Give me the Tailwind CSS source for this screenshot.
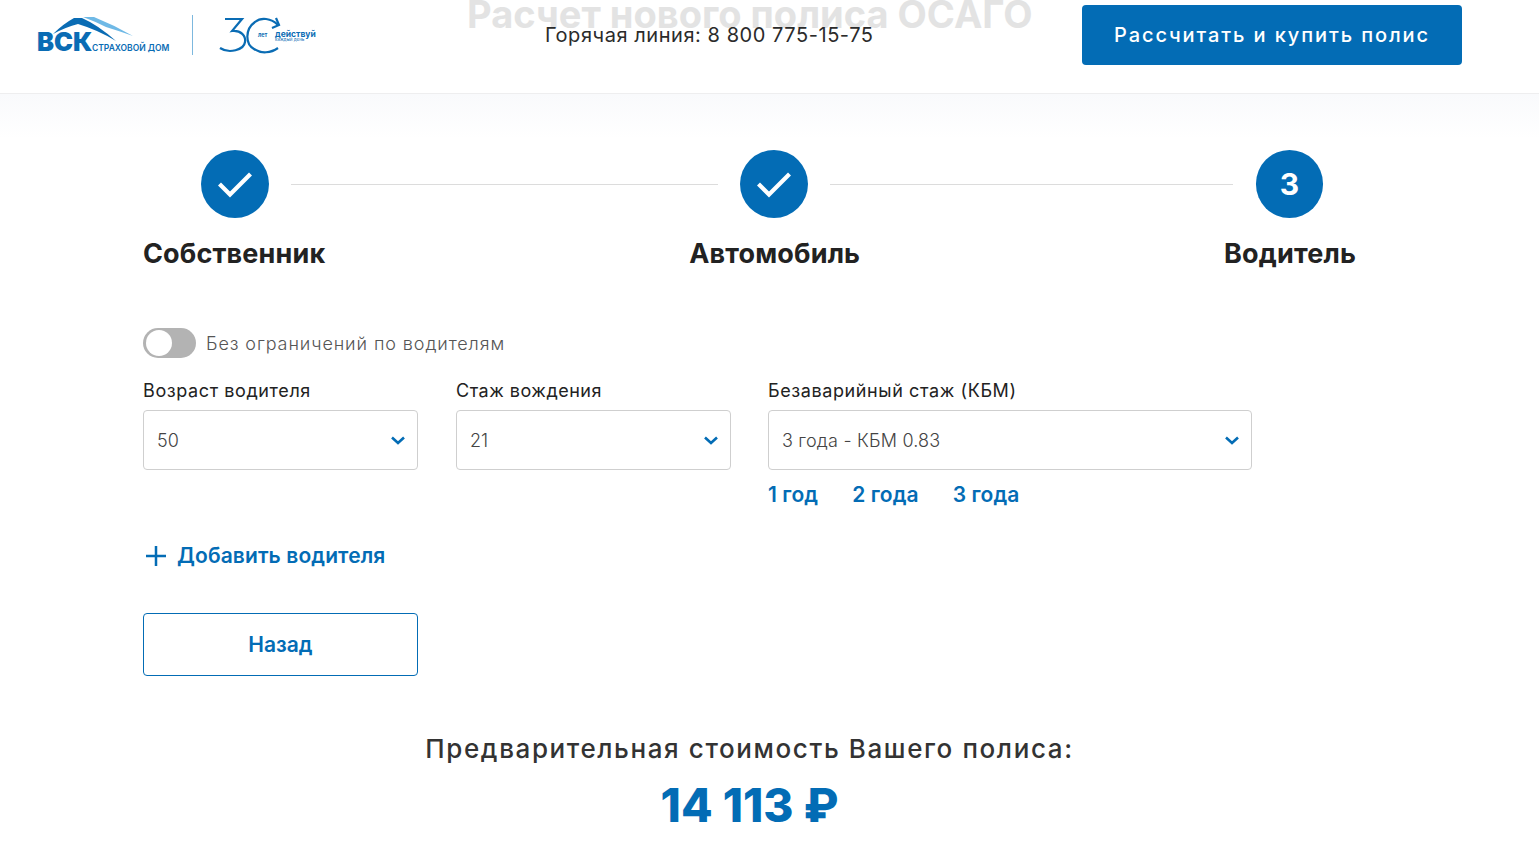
<!DOCTYPE html>
<html lang="ru">
<head>
    <meta charset="UTF-8">
    <meta name="viewport" content="width=device-width, initial-scale=1.0">
    <title>ВСК - Расчет полиса ОСАГО</title>
    <script src="https://cdn.jsdelivr.net/npm/@tailwindcss/browser@4"></script>
</head>
<body class="bg-white font-['Inter','Noto_Sans',sans-serif] text-[#222] overflow-hidden h-[851px]">

    <header class="relative h-[94px] border-b border-[#eeeeef] bg-white flex items-start pt-[5px] pl-[36px] overflow-hidden">
        <h1 class="absolute left-[467px] top-[-11px] w-[564px] text-center text-[38px] leading-[50px] font-bold text-[#e3e3e3] whitespace-nowrap">Расчет нового полиса ОСАГО</h1>

        <div class="relative w-[280px] h-[60px] shrink-0">
            <svg class="absolute left-0 top-[10px]" width="110" height="30" viewBox="0 0 110 30">
                <path d="M17 19 Q27 9 38 3 L46 3 Q62 10 80 26 Q62 15 42 9 Q30 12 17 19Z" fill="#0a6cb4"/>
                <path d="M47 2 L58 2 Q78 10 97 21 Q80 15 70 12 Q58 6 47 2Z" fill="#6fb9e6"/>
            </svg>
            <span class="absolute left-[1px] top-[22px] text-[25.500px] leading-[30px] font-black text-[#0a6cb4]">ВСК</span>
            <span class="absolute left-[56px] top-[37px] text-[8.500px] leading-[12px] font-semibold text-[#0a6cb4] whitespace-nowrap">СТРАХОВОЙ ДОМ</span>
            <div class="absolute left-[156px] top-[10px] w-px h-[40px] bg-[#7db8de]"></div>
            <svg class="absolute left-[183px] top-[12px]" width="62" height="38" viewBox="0 0 62 38" fill="none" stroke="#0a6cb4" stroke-width="2.200">
                <path d="M6 2 H23 L13 14 C22 13 27 19 26 25 C25 33 10 37 1 31"/>
                <path d="M59 8 C52 1 42 0 36 5 C26 12 26 27 35 32 C42 37 52 36 59 31"/>
                <path d="M53 11 L60 8 L57 1"/>
            </svg>
            <span class="absolute left-[222px] top-[26px] text-[5.500px] leading-[8px] font-bold text-[#0a6cb4]">лет</span>
            <span class="absolute left-[239px] top-[24px] text-[8.500px] leading-[10px] font-bold text-[#0a6cb4]">действуй</span>
            <span class="absolute left-[239px] top-[32px] text-[4.500px] leading-[6px] text-[#0a6cb4] whitespace-nowrap">каждый день</span>
        </div>

        <p class="ml-[229px] mt-[15px] text-[20px] leading-[30px] tracking-[0.55px] text-[#2b2b2b] relative whitespace-nowrap">Горячая линия: 8 800 775-15-75</p>

        <button class="ml-auto mr-[77px] w-[380px] h-[60px] rounded-[4px] bg-[#036cb5] text-white text-[20px] font-medium tracking-[1.9px] whitespace-nowrap">Рассчитать и купить полис</button>
    </header>

    <main class="bg-gradient-to-b from-[#f9fafc] to-white to-[45px] pl-[143px] pr-[183px] pt-[56px]">
        <!-- шаги -->
        <div class="flex items-center pl-[58px]">
            <div class="w-[68px] h-[68px] rounded-full bg-[#036cb5] flex items-center justify-center shrink-0">
                <svg width="34" height="28" viewBox="0 0 34 28" fill="none" stroke="#fff" stroke-width="4.200"><path d="M1.500 14 L12 24.500 L32.500 4"/></svg>
            </div>
            <div class="ml-[22px] w-[427px] h-px bg-[#dcdcdc]"></div>
            <div class="ml-[22px] w-[68px] h-[68px] rounded-full bg-[#036cb5] flex items-center justify-center shrink-0">
                <svg width="34" height="28" viewBox="0 0 34 28" fill="none" stroke="#fff" stroke-width="4.200"><path d="M1.500 14 L12 24.500 L32.500 4"/></svg>
            </div>
            <div class="ml-[22px] w-[403px] h-px bg-[#dcdcdc]"></div>
            <div class="ml-[23px] w-[67px] h-[68px] rounded-full bg-[#036cb5] flex items-center justify-center shrink-0 text-white text-[30px] font-bold">3</div>
        </div>
        <div class="flex mt-[18px] text-[27px] leading-[36px] font-bold tracking-[0.15px] text-[#222] w-[1213px] justify-between">
            <span>Собственник</span>
            <span>Автомобиль</span>
            <span>Водитель</span>
        </div>

        <!-- форма -->
        <div class="flex items-center mt-[56px] h-[30px]">
            <div class="relative w-[53px] h-[30px] rounded-full bg-[#b3b3b3]">
                <div class="absolute left-[3px] top-[2px] w-[26px] h-[26px] rounded-full bg-white"></div>
            </div>
            <span class="ml-[10px] text-[18px] font-light text-[#555] tracking-[0.9px] whitespace-nowrap">Без ограничений по водителям</span>
        </div>

        <div class="flex gap-[38px] mt-[20px]">
            <div class="w-[275px]">
                <label class="block h-[26px] text-[18px] leading-[26px] tracking-[0.6px] text-[#222] whitespace-nowrap">Возраст водителя</label>
                <div class="mt-[6px] h-[60px] border border-[#cfcfcf] rounded-[4px] flex items-center justify-between pl-[13px] pr-[12px] text-[18px] font-light text-[#444]">
                    <span>50</span>
                    <svg width="14" height="9" viewBox="0 0 14 9" fill="none" stroke="#036cb5" stroke-width="2.600"><path d="M1 1.500 L7 7 L13 1.500"/></svg>
                </div>
            </div>
            <div class="w-[275px]">
                <label class="block h-[26px] text-[18px] leading-[26px] tracking-[0.5px] text-[#222] whitespace-nowrap">Стаж вождения</label>
                <div class="mt-[6px] h-[60px] border border-[#cfcfcf] rounded-[4px] flex items-center justify-between pl-[13px] pr-[12px] text-[18px] font-light text-[#444]">
                    <span>21</span>
                    <svg width="14" height="9" viewBox="0 0 14 9" fill="none" stroke="#036cb5" stroke-width="2.600"><path d="M1 1.500 L7 7 L13 1.500"/></svg>
                </div>
            </div>
            <div class="w-[484px] -ml-px">
                <label class="block h-[26px] text-[18px] leading-[26px] tracking-[0.6px] text-[#222] whitespace-nowrap">Безаварийный стаж (КБМ)</label>
                <div class="mt-[6px] h-[60px] border border-[#cfcfcf] rounded-[4px] flex items-center justify-between pl-[13px] pr-[12px] text-[18px] font-light text-[#444]">
                    <span class="tracking-[0.2px]">3 года - КБМ 0.83</span>
                    <svg width="14" height="9" viewBox="0 0 14 9" fill="none" stroke="#036cb5" stroke-width="2.600"><path d="M1 1.500 L7 7 L13 1.500"/></svg>
                </div>
                <div class="flex gap-[34px] mt-[10px] text-[21px] leading-[30px] tracking-[0.1px] font-semibold text-[#036cb5]">
                    <a href="#">1 год</a>
                    <a href="#">2 года</a>
                    <a href="#">3 года</a>
                </div>
            </div>
        </div>

        <a href="#" class="flex items-center mt-[30px] h-[32px] text-[21px] tracking-[0.1px] font-semibold text-[#036cb5]">
            <svg class="ml-[3px]" width="20" height="20" viewBox="0 0 20 20" fill="none" stroke="#036cb5" stroke-width="2.500"><path d="M10 0 V20 M0 10 H20"/></svg>
            <span class="ml-[11px]">Добавить водителя</span>
        </a>

        <button class="block mt-[41px] w-[275px] h-[63px] border border-[#036cb5] rounded-[4px] text-[21px] font-semibold text-[#036cb5]">Назад</button>

        <div class="w-[1213px] text-center mt-[53px]">
            <p class="text-[26px] leading-[40px] font-medium text-[#333] tracking-[1.6px]">Предварительная стоимость Вашего полиса:</p>
            <p class="mt-[6px] text-[46px] leading-[60px] font-extrabold text-[#036cb5]">14 113 ₽</p>
        </div>
    </main>
</body>
</html>
